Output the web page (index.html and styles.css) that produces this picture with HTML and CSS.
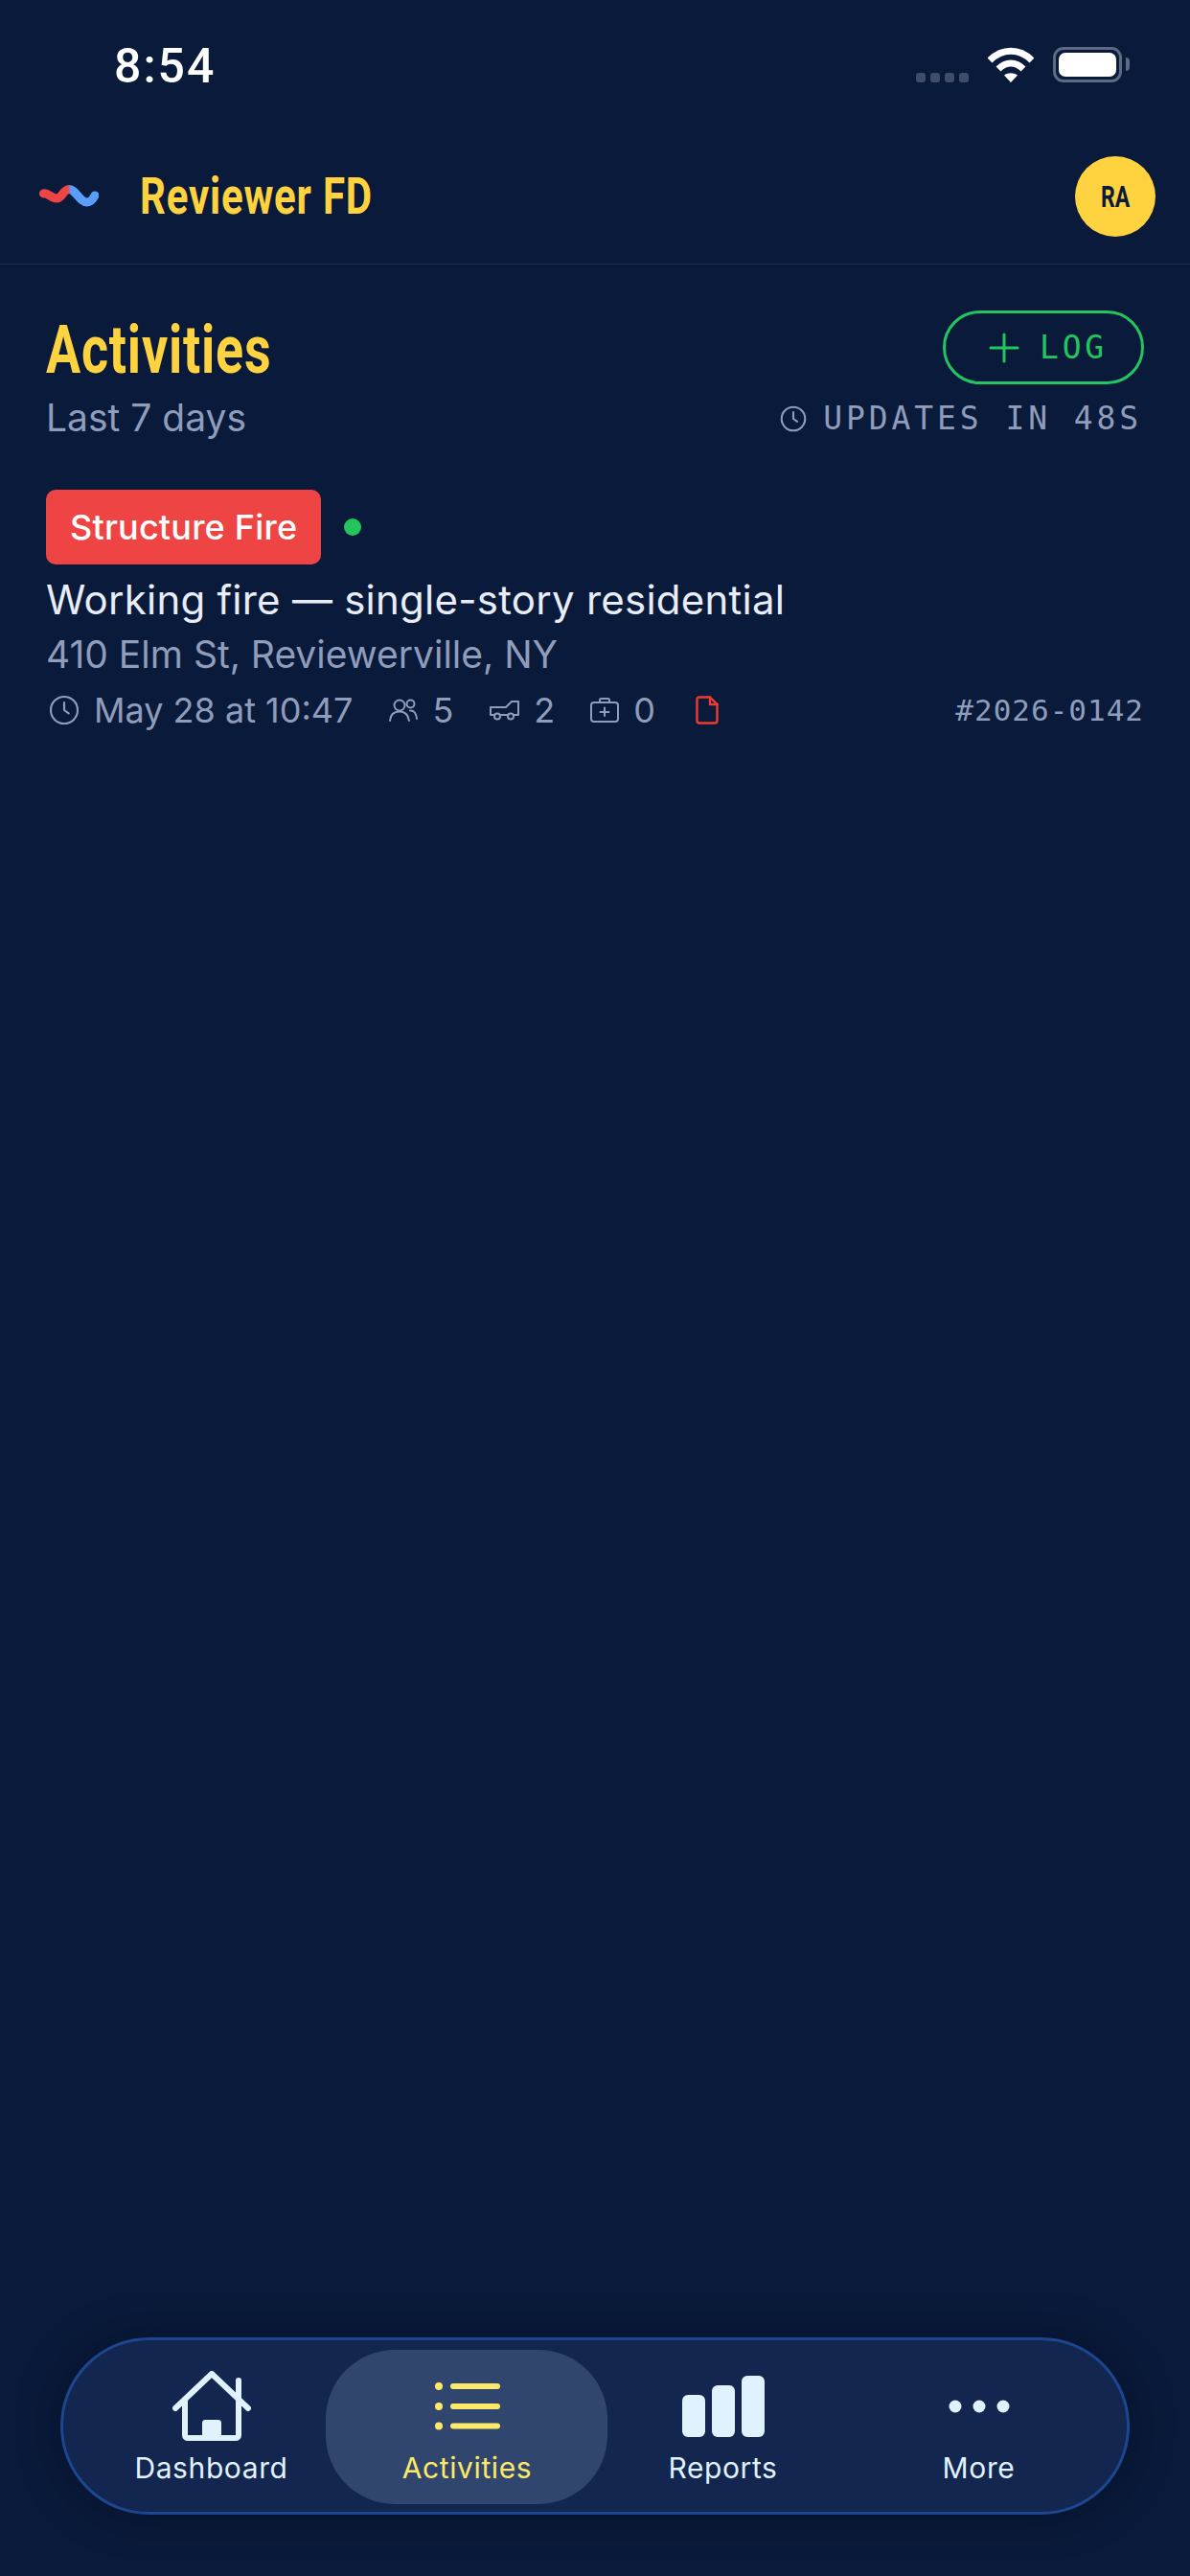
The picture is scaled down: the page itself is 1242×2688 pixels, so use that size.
FILE: index.html
```html
<!DOCTYPE html>
<html lang="en">
<head>
    <meta charset="UTF-8">
    <meta name="viewport" content="width=device-width, initial-scale=1.0">
    <title>Activities</title>
    <link rel="stylesheet" href="styles.css">
</head>
<body>
    <div class="statusbar">
        <span class="clock">8:54</span>
        <div class="status-icons">
            <div class="signal"><i></i><i></i><i></i><i></i></div>
            <svg class="wifi" width="48" height="37" viewBox="0 0 48 37">
                <path d="M2 14C15 1 33 1 46 14" fill="none" stroke="#fff" stroke-width="7"/>
                <path d="M11 23C19 15 29 15 37 23" fill="none" stroke="#fff" stroke-width="7"/>
                <path d="M24 37L17 29.500C21 26.500 27 26.500 31 29.500Z" fill="#fff"/>
            </svg>
            <div class="battery"><div class="battery-fill"></div></div>
        </div>
    </div>

    <header class="topbar">
        <div class="brand">
            <svg class="logo" width="62" height="24" viewBox="0 0 62 24">
                <defs>
                    <linearGradient id="wave" x1="0" x2="62" y1="0" y2="0" gradientUnits="userSpaceOnUse">
                        <stop offset="0.47" stop-color="#ef4444"/>
                        <stop offset="0.54" stop-color="#5b9dfa"/>
                    </linearGradient>
                </defs>
                <path d="M4.500 9C8 7 12 14 18 14C24 14 25 4.500 31 4.500C38 4.500 42 18 50 18C54 18 56 15 58 11" fill="none" stroke="url(#wave)" stroke-width="9" stroke-linecap="round"/>
            </svg>
            <span class="brand-name">Reviewer FD</span>
        </div>
        <div class="avatar"><span>RA</span></div>
    </header>

    <main class="content">
        <div class="page-head">
            <div>
                <h1 class="page-title">Activities</h1>
                <p class="page-sub">Last 7 days</p>
            </div>
            <div class="page-actions">
                <button class="log-btn">
                    <svg width="32" height="32" viewBox="0 0 32 32"><path d="M16 2V30M2 16H30" stroke="#22c55e" stroke-width="3" stroke-linecap="round"/></svg>
                    <span>LOG</span>
                </button>
                <div class="updates">
                    <svg width="28" height="28" viewBox="0 0 24 24" fill="none" stroke="#8f9dbb" stroke-width="1.800" stroke-linecap="round" stroke-linejoin="round"><circle cx="12" cy="12" r="10.500"/><path d="M12 6V12L15.500 14.500"/></svg>
                    <span>UPDATES IN 48S</span>
                </div>
            </div>
        </div>

        <article class="activity">
            <div class="activity-tags">
                <span class="badge">Structure Fire</span>
                <span class="live-dot"></span>
            </div>
            <h2 class="activity-title">Working fire — single-story residential</h2>
            <p class="activity-address">410 Elm St, Reviewerville, NY</p>
            <div class="activity-meta">
                <div class="meta-item meta-date">
                    <svg width="32" height="32" viewBox="0 0 24 24" fill="none" stroke="#8f9dbb" stroke-width="1.600" stroke-linecap="round" stroke-linejoin="round"><circle cx="12" cy="12" r="10.500"/><path d="M12 6V12L15.500 14.500"/></svg>
                    <span>May 28 at 10:47</span>
                </div>
                <div class="meta-item">
                    <svg width="30" height="24" viewBox="0 0 30 24" fill="none" stroke="#8f9dbb" stroke-width="2" stroke-linecap="round" stroke-linejoin="round"><circle cx="11" cy="7" r="5.500"/><path d="M1 23C1.500 16.500 5.500 13.500 11 13.500C16.500 13.500 20 16.500 21 23"/><circle cx="22.500" cy="5.500" r="4"/><path d="M22 12.500C26 12 28.500 15.500 29 21"/></svg>
                    <span>5</span>
                </div>
                <div class="meta-item">
                    <svg width="32" height="22" viewBox="0 0 32 22" fill="none" stroke="#8f9dbb" stroke-width="2" stroke-linecap="round" stroke-linejoin="round"><path d="M5 16H2V8H18L24 2H31V16H26M20 16H12M6 16H5"/><circle cx="9" cy="17.500" r="3"/><circle cx="23" cy="17.500" r="3"/></svg>
                    <span>2</span>
                </div>
                <div class="meta-item">
                    <svg width="30" height="26" viewBox="0 0 30 26" fill="none" stroke="#8f9dbb" stroke-width="2" stroke-linecap="round" stroke-linejoin="round"><rect x="1" y="5" width="28" height="20" rx="3"/><path d="M10 5V2.500C10 1.500 10.500 1 11.500 1H18.500C19.500 1 20 1.500 20 2.500V5M15 10.500V19M10.500 15H19.500"/></svg>
                    <span>0</span>
                </div>
                <svg class="meta-doc" width="24" height="30" viewBox="0 0 24 30" fill="none" stroke="#ef3b2f" stroke-width="2.400" stroke-linecap="round" stroke-linejoin="round"><path d="M15 1.500H4C2.500 1.500 1.500 2.500 1.500 4V26C1.500 27.500 2.500 28.500 4 28.500H20C21.500 28.500 22.500 27.500 22.500 26V9Z"/><path d="M15 1.500V9H22.500"/></svg>
                <span class="incident-no">#2026-0142</span>
            </div>
        </article>
    </main>

    <nav class="tabbar">
        <a class="tab">
            <div class="tab-icon">
                <svg width="82" height="74" viewBox="0 0 82 74" fill="none">
                    <path d="M3 39L41 3L79 39" stroke="#e0f2fe" stroke-width="6" stroke-linecap="round" stroke-linejoin="round"/>
                    <path d="M13 30V67C13 69 14.500 70 16 70H66C67.500 70 69 69 69 67V10" stroke="#e0f2fe" stroke-width="6" stroke-linecap="round"/>
                    <path d="M66 10H72V26H66Z" fill="#e0f2fe"/>
                    <path d="M31 72V54C31 52.500 32 51 34 51H48C50 51 51 52.500 51 54V72Z" fill="#e0f2fe"/>
                </svg>
            </div>
            <span>Dashboard</span>
        </a>
        <a class="tab tab-active">
            <div class="tab-icon">
                <svg width="68" height="50" viewBox="0 0 68 50" fill="#fde968">
                    <circle cx="4" cy="4" r="4"/><circle cx="4" cy="25" r="4"/><circle cx="4" cy="45.500" r="4"/>
                    <rect x="16" y="1" width="52" height="6" rx="3"/><rect x="16" y="22" width="52" height="6" rx="3"/><rect x="16" y="42.500" width="52" height="6" rx="3"/>
                </svg>
            </div>
            <span>Activities</span>
        </a>
        <a class="tab">
            <div class="tab-icon">
                <svg width="86" height="64" viewBox="0 0 86 64" fill="#e0f2fe">
                    <rect x="0" y="20" width="24" height="44" rx="6"/><rect x="31" y="10" width="24" height="54" rx="6"/><rect x="62" y="0" width="24" height="64" rx="6"/>
                </svg>
            </div>
            <span>Reports</span>
        </a>
        <a class="tab">
            <div class="tab-icon">
                <svg width="64" height="14" viewBox="0 0 64 14" fill="#e0f2fe">
                    <circle cx="7" cy="7" r="6.500"/><circle cx="32" cy="7" r="6.500"/><circle cx="57" cy="7" r="6.500"/>
                </svg>
            </div>
            <span>More</span>
        </a>
    </nav>
</body>
</html>
```

FILE: styles.css
```css
* {
    box-sizing: border-box;
}
body {
    display: flex;
    flex-direction: column;
    height: 2688px;
    margin: 0;
    background: #0a1a3a;
    color: #e8edf7;
    font-family: Inter, "Noto Sans", sans-serif;
    overflow: hidden;
}
.statusbar {
    display: flex;
    justify-content: space-between;
    flex: none;
    height: 135px;
    padding: 38px 71px 0 119px;
}
.clock {
    color: #fff;
    font-family: Roboto, sans-serif;
    font-size: 50px;
    font-weight: 500;
    letter-spacing: 2px;
    line-height: 62px;
}
.status-icons {
    display: flex;
    align-items: flex-end;
    height: 48px;
}
.signal {
    display: flex;
    gap: 5px;
    margin-right: 20px;
}
.signal i {
    width: 10px;
    height: 10px;
    border-radius: 3px;
    background: #3f4d69;
}
.battery {
    position: relative;
    width: 72px;
    height: 37px;
    margin-left: 20px;
    padding: 3px;
    border: 3px solid #5d6a84;
    border-radius: 11px;
}
.battery::after {
    content: "";
    position: absolute;
    top: 8px;
    right: -11px;
    width: 4px;
    height: 14px;
    border-radius: 0 4px 4px 0;
    background: #5d6a84;
}
.battery-fill {
    height: 100%;
    border-radius: 7px;
    background: #fff;
}
.topbar {
    display: flex;
    align-items: center;
    justify-content: space-between;
    flex: none;
    height: 141px;
    padding: 0 36px 0 41px;
    border-bottom: 1px solid #21304f;
}
.brand {
    display: flex;
    align-items: center;
    gap: 43px;
}
/* no condensed family installed, so the headings squeeze Roboto */
.brand-name {
    color: #ffd23f;
    font-family: Roboto, sans-serif;
    font-size: 53px;
    font-weight: 700;
    letter-spacing: 1px;
    transform: scaleX(0.793);
    transform-origin: left center;
}
.avatar {
    display: flex;
    align-items: center;
    justify-content: center;
    width: 84px;
    height: 84px;
    border-radius: 50%;
    background: #ffd23f;
    color: #0a1a3a;
    font-family: Roboto, sans-serif;
    font-size: 32px;
    font-weight: 700;
}
.avatar span {
    transform: scaleX(0.72);
}
.content {
    flex: 1;
    padding: 48px 48px 0;
}
.page-head {
    display: flex;
    justify-content: space-between;
}
.page-title {
    margin: 1px 0 0;
    color: #ffd23f;
    font-family: Roboto, sans-serif;
    font-size: 70px;
    font-weight: 700;
    letter-spacing: 1px;
    line-height: 80px;
    transform: scaleX(0.77);
    transform-origin: left center;
}
.page-sub {
    margin: 8px 0 0;
    color: #8f9dbb;
    font-size: 39px;
    line-height: 46px;
}
.page-actions {
    display: flex;
    flex-direction: column;
    align-items: flex-end;
}
.log-btn {
    display: flex;
    align-items: center;
    justify-content: center;
    gap: 21px;
    width: 210px;
    height: 77px;
    padding: 0 0 0 10px;
    border: 3px solid #22c55e;
    border-radius: 39px;
    background: transparent;
    color: #22c55e;
    font-family: "DejaVu Sans Mono", monospace;
    font-size: 33px;
    letter-spacing: 3.800px;
}
.updates {
    display: flex;
    align-items: center;
    gap: 17px;
    margin-top: 20px;
    padding-right: 2px;
    color: #8f9dbb;
    font-family: "DejaVu Sans Mono", monospace;
    font-size: 33px;
    letter-spacing: 3.900px;
    line-height: 32px;
}
.activity {
    margin-top: 52px;
}
.activity-tags {
    display: flex;
    align-items: center;
    gap: 24px;
}
.badge {
    display: block;
    height: 78px;
    padding: 0 25px;
    border-radius: 10px;
    background: #ef4444;
    color: #fff;
    font-size: 36px;
    font-weight: 500;
    letter-spacing: 0.200px;
    line-height: 78px;
}
.live-dot {
    width: 18px;
    height: 18px;
    border-radius: 50%;
    background: #22c55e;
}
.activity-title {
    margin: 12px 0 0;
    font-size: 42px;
    font-weight: 400;
    letter-spacing: 0.250px;
    line-height: 50px;
}
.activity-address {
    margin: 9px 0 0;
    color: #8f9dbb;
    font-size: 39px;
    line-height: 46px;
}
.activity-meta {
    display: flex;
    align-items: center;
    margin-top: 12px;
    color: #8f9dbb;
    font-size: 36px;
    line-height: 46px;
}
.meta-item {
    display: flex;
    align-items: center;
    gap: 15px;
    margin-right: 37px;
}
.meta-date {
    margin-left: 3px;
    margin-right: 38px;
}
.meta-doc {
    margin-left: 5px;
}
.incident-no {
    margin-left: auto;
    font-family: "DejaVu Sans Mono", monospace;
    font-size: 31px;
    letter-spacing: 1px;
}
.tabbar {
    display: grid;
    grid-template-columns: repeat(4, 267px);
    flex: none;
    width: 1116px;
    height: 185px;
    margin: 0 0 64px 63px;
    padding: 0 0 0 21px;
    border: 3px solid #1d4690;
    border-radius: 93px;
    background: #12264f;
    box-shadow: 0 0 40px rgba(4, 12, 30, 0.5);
}
.tab {
    position: relative;
    display: flex;
    flex-direction: column;
    align-items: center;
    padding-top: 29px;
    color: #e0f2fe;
    font-size: 30px;
    font-weight: 400;
    letter-spacing: 0.600px;
    line-height: 38px;
}
.tab-icon {
    position: relative;
    display: flex;
    align-items: center;
    justify-content: center;
    height: 80px;
    margin-bottom: 5px;
}
.tab span {
    position: relative;
}
.tab-active {
    color: #fde968;
}
.tab-active::before {
    content: "";
    position: absolute;
    top: 10px;
    bottom: 8px;
    left: -14px;
    right: -13px;
    border-radius: 72px;
    background: #31466f;
}
```
